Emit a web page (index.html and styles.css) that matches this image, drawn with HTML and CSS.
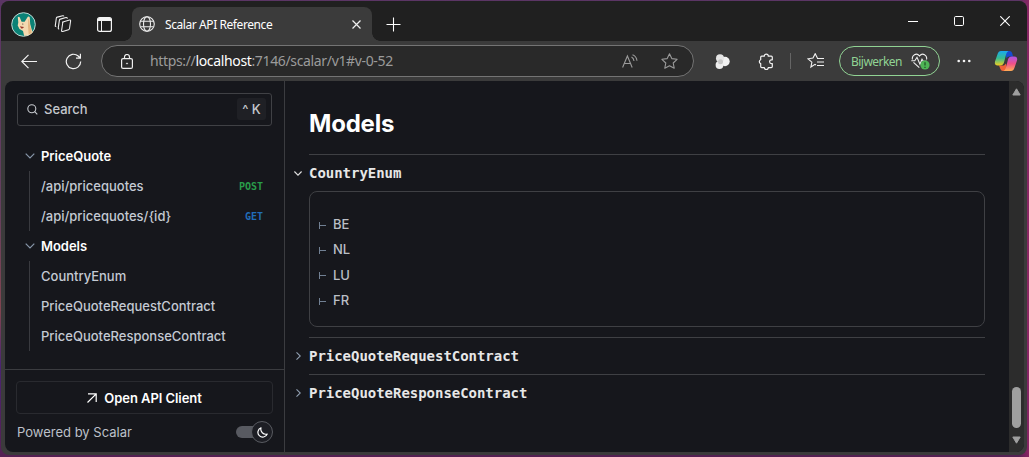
FILE: index.html
```html
<!DOCTYPE html>
<html lang="en">
<head>
<meta charset="utf-8">
<title>Scalar API Reference</title>
<link rel="stylesheet" href="styles.css">
</head>
<body>
<div class="window">
  <header class="tabstrip">
    <svg class="avatar" width="25" height="25" viewBox="0 0 25 25"><circle cx="12.500" cy="12.500" r="11.800" fill="#0b8276" stroke="#bdd8d4" stroke-width="1"/><path d="M7.300 10.500L6.800 5.200q1-1.200 2 .2l1.800 4.400h3l3.200-5q1.300-1 2 .7l.4 6.500 1.500 5.500 1 3q-3.500 3.600-8.600 3.300L12 19l-3.500-2-1.800-3.500z" fill="#f4d9b0"/><path d="M17.200 7l1.100 1 .5 5 1.500 5 .4 2.800-3 1.700-.7-8z" fill="#e3b681"/><path d="M8.800 14.300l4.200.6q-1.300 2-2.700 1.500z" fill="#9c3829"/><circle cx="11.800" cy="12" r=".6" fill="#3f3029"/></svg>
    <svg class="workspaces" width="18" height="18" viewBox="0 0 18 18" fill="none" stroke="#eee" stroke-width="1.100" stroke-linejoin="round"><path d="M8 7.200L15.600 5q1.200-.2 1 1L15.500 13.500q-.1.900-1 1.200L8.700 16.500q-1.300.3-1.100-1L8.700 8q.1-.7.900-1M5.200 14q-1.100 0-.9-1.300L5.400 5.200q.1-.8 1-1.100L12 2.500q1.300-.3 1.200 1.200M2.300 11.800q-1.200 0-1-1.200L2.300 3.300q.1-.9 1-1.200L8.700.8q1-.2 1.200.6"/></svg>
    <svg class="tab-actions" width="15" height="15" viewBox="0 0 15 15"><rect x=".6" y=".6" width="13.800" height="13.800" rx="2" fill="none" stroke="#f4f4f4" stroke-width="1.200"/><path d="M1 2a1 1 0 0 1 1-1h11a1 1 0 0 1 1 1v2H1z" fill="#f4f4f4"/><path d="M4.500 4v10" stroke="#f4f4f4"/></svg>
    <div class="tab">
      <svg width="16" height="16" viewBox="0 0 16 16" fill="none" stroke="#ececec" stroke-width="1.100"><circle cx="8" cy="8" r="7.300"/><ellipse cx="8" cy="8" rx="3.500" ry="7.300"/><path d="M1.500 5.300h13M1.500 10.700h13"/></svg>
      <span class="tab-title">Scalar API Reference</span>
      <svg class="tab-close" width="9" height="9" viewBox="0 0 9 9" stroke="#f0f0f0" stroke-width="1.200"><path d="M.5.5l8 8M8.500.5l-8 8"/></svg>
    </div>
    <svg class="new-tab" width="15" height="15" viewBox="0 0 15 15" stroke="#fff" stroke-width="1.100"><path d="M.5 7.500h14M7.500.5v14"/></svg>
    <div class="controls">
      <svg width="10" height="10" viewBox="0 0 10 10"><path d="M0 5.500h10" stroke="#fff"/></svg>
      <svg width="10" height="10" viewBox="0 0 10 10"><rect x=".5" y=".5" width="9" height="9" rx="1.200" fill="none" stroke="#fff"/></svg>
      <svg width="10" height="10" viewBox="0 0 10 10" stroke="#fff" stroke-width="1.100"><path d="M.3.3l9.400 9.400M9.700.3L.3 9.700"/></svg>
    </div>
  </header>

  <div class="toolbar">
    <svg width="16" height="15" viewBox="0 0 16 15" fill="none" stroke="#f2f2f2" stroke-width="1.200"><path d="M16 7.500H.8M7.500.8L.8 7.500l6.700 6.700"/></svg>
    <svg class="reload" width="17" height="17" viewBox="0 0 17 17" fill="none" stroke="#f2f2f2" stroke-width="1.200"><path d="M15.700 8.500A7.200 7.200 0 1 1 13.200 3l2 2M15.400.8V5.200H11"/></svg>
    <div class="address">
      <svg width="12" height="15" viewBox="0 0 12 15" fill="none" stroke="#eee" stroke-width="1.200"><rect x=".6" y="4.600" width="10.800" height="9.800" rx="1.500"/><path d="M3.500 4.500V3a2.500 2.500 0 0 1 5 0v1.500"/><circle cx="6" cy="9.500" r=".6" fill="#eee" stroke-width=".6"/></svg>
      <span class="url">https://<b>localhost</b>:7146/scalar/v1#v-0-52</span>
      <svg class="read-aloud" width="16" height="15" viewBox="0 0 16 15" fill="none" stroke="#9a9a9a" stroke-width="1.100"><path d="M.6 13.500L5.400 2l4.800 11.500M2.200 9.500h6.400M9.500 3q2.300 1.200 2.500 4M10.500.8q4 1.500 4.500 6"/></svg>
      <svg class="favorite" width="17" height="16" viewBox="0 0 17 16" fill="none" stroke="#9a9a9a" stroke-width="1.100" stroke-linejoin="round"><path d="M8.500.8l2.300 4.800 5.300.7-3.900 3.700 1 5.200-4.700-2.500-4.700 2.500 1-5.200L.9 6.300l5.300-.7z"/></svg>
    </div>
    <svg class="ext" width="15" height="15" viewBox="0 0 15 15"><circle cx="10" cy="7.500" r="4.700" fill="#f1f1f1"/><circle cx="5" cy="4.300" r="4" fill="#e4e4e4"/><circle cx="4.500" cy="11" r="3.900" fill="#ededed"/><circle cx="5.500" cy="7.700" r="2.500" fill="#c7c7c7"/></svg>
    <svg class="puzzle" width="16" height="17" viewBox="0 0 16 17" fill="none" stroke="#f2f2f2" stroke-width="1.200" stroke-linejoin="round"><path d="M3.700 3.200h2.600a2 2 0 0 1 4 0h3q1 0 1 1v2.600h-.8a1.900 1.900 0 0 0 0 3.800h.8v3q0 1-1 1h-3a2 2 0 0 1-4 0H3.700q-1 0-1-1v-3a2 2 0 0 1 0-3.800V4.200q0-1 1-1z"/></svg>
    <i class="divider"></i>
    <svg class="favlist" width="17" height="16" viewBox="0 0 17 16" fill="none" stroke="#f2f2f2" stroke-width="1.100"><path d="M9 12l-1-.6L3.900 14l1-4.800L1 5.800l5-.7L8.200.7l2.200 4.400M10 5.500h7M10 9h7M10 12.500h7"/></svg>
    <button class="update"><span>Bijwerken</span>
      <svg width="19" height="17" viewBox="0 0 19 17" fill="none" stroke="#eee" stroke-width="1.100"><path d="M1.500 6.500C.4 2.500 5.500-1 8.500 3 11.500-1 16.600 2.500 15.500 6.500M2.500 9.300l5.800 5.400M.3 7.700h3.500L6 4.300l3 7 2-5 1.300 2h3.500"/><circle cx="14" cy="12" r="4.600" fill="#4eb455" stroke="none"/><path d="M14 9.200v3.300M14 13.700v1.200" stroke="#1e4d22" stroke-width="1.200"/></svg>
    </button>
    <svg class="more" width="14" height="4" viewBox="0 0 14 4" fill="#f4f4f4"><circle cx="1.700" cy="2" r="1.300"/><circle cx="7" cy="2" r="1.300"/><circle cx="12.300" cy="2" r="1.300"/></svg>
    <svg class="copilot" width="24" height="22" viewBox="0 0 24 22">
      <defs><linearGradient id="a" x2="0" y2="1"><stop stop-color="#19a9ef"/><stop offset=".5" stop-color="#36bc91"/><stop offset="1" stop-color="#f3cd20"/></linearGradient><linearGradient id="b" x2="0" y2="1"><stop stop-color="#ad55e4"/><stop offset=".5" stop-color="#ef5089"/><stop offset="1" stop-color="#ffad55"/></linearGradient></defs>
      <path d="M11 1h4.500q2 0 2.600 2l1 3.500h-4q-2 0-2.600 2z" fill="#174bd0"/><path d="M5 15.500h5l2-2 1 7.500H9q-2 0-2.600-2z" fill="#f06138"/>
      <path d="M7 1h7.500q-1.700 1-2.300 3L10 12.500q-.8 3-4 3H4q-4 0-3-4L3.600 4Q4.500 1 7 1z" fill="url(#a)"/><path d="M17 21H9.500q1.700-1 2.300-3L14 9.500q.8-3 4-3H20q4 0 3 4l-2.600 7.500q-.9 3-3.400 3z" fill="url(#b)"/>
    </svg>
  </div>

  <div class="page">
    <aside class="sidebar">
      <div class="search">
        <svg width="11" height="11" viewBox="0 0 11 11" fill="none" stroke="#c8cbd0" stroke-width="1.100"><circle cx="4.800" cy="4.800" r="4"/><path d="M7.700 7.700l2.600 2.600"/></svg>
        <span>Search</span><kbd><i>^</i> K</kbd>
      </div>
      <nav class="nav">
        <div class="group"><svg width="10" height="6" viewBox="0 0 10 6" fill="none" stroke="#8796a9" stroke-width="1.200"><path d="M.7.7L5 5 9.300.7"/></svg>PriceQuote</div>
        <div class="items">
          <a>/api/pricequotes<em class="method post">POST</em></a>
          <a>/api/pricequotes/{id}<em class="method get">GET</em></a>
        </div>
        <div class="group"><svg width="10" height="6" viewBox="0 0 10 6" fill="none" stroke="#8796a9" stroke-width="1.200"><path d="M.7.7L5 5 9.300.7"/></svg>Models</div>
        <div class="items">
          <a>CountryEnum</a>
          <a>PriceQuoteRequestContract</a>
          <a>PriceQuoteResponseContract</a>
        </div>
      </nav>
      <footer class="side-foot">
        <button class="client"><svg width="10" height="10" viewBox="0 0 10 10" fill="none" stroke="#fff" stroke-width="1.200"><path d="M.5 9.500l8.700-8.700M1 .8h8.200V9"/></svg>Open API Client</button>
        <div class="powered"><span>Powered by Scalar</span>
          <span class="toggle"><span class="knob"><svg width="11" height="11" viewBox="0 0 11 11" fill="none" stroke="#fff" stroke-width="1.200" stroke-linejoin="round"><path d="M4 .8A4.800 4.800 0 1 0 10.200 7 5 5 0 0 1 4 .8z"/></svg></span></span>
        </div>
      </footer>
    </aside>

    <main class="content">
      <h1>Models</h1>
      <section class="model first">
        <h2><svg class="down" width="8" height="5" viewBox="0 0 8 5" fill="none" stroke="#e0e0e0" stroke-width="1.100"><path d="M.4.5L4 4.200 7.600.5"/></svg>CountryEnum</h2>
        <ul class="enum"><li><i></i>BE</li><li><i></i>NL</li><li><i></i>LU</li><li><i></i>FR</li></ul>
      </section>
      <section class="model">
        <h2><svg width="5" height="8" viewBox="0 0 5 8" fill="none" stroke="#91a0b2" stroke-width="1.100"><path d="M.5.4L4.300 4 .5 7.600"/></svg>PriceQuoteRequestContract</h2>
      </section>
      <section class="model">
        <h2><svg width="5" height="8" viewBox="0 0 5 8" fill="none" stroke="#91a0b2" stroke-width="1.100"><path d="M.5.4L4.300 4 .5 7.600"/></svg>PriceQuoteResponseContract</h2>
      </section>
    </main>

    <div class="scrollbar">
      <svg width="9" height="8" viewBox="0 0 9 8"><path d="M4.500.8l3.700 6.200H.8z" fill="#9f9f9f" stroke="#9f9f9f" stroke-linejoin="round"/></svg>
      <div class="thumb"></div>
      <svg width="9" height="8" viewBox="0 0 9 8"><path d="M4.500 7.200L.8 1h7.400z" fill="#9f9f9f" stroke="#9f9f9f" stroke-linejoin="round"/></svg>
    </div>
  </div>
</div>
</body>
</html>
```
FILE: styles.css
```css
* { box-sizing: border-box; }
body {
  margin: 0;
  width: 1029px;
  height: 457px;
  padding: 1px 2px 2px 1px;
  overflow: hidden;
  background: linear-gradient(90deg, rgba(59, 24, 104, 0) 99%, #8c2464 100%), linear-gradient(#5b3565 0%, #643f5e 45%, #81444f 68%, #4a2472 80%, #542052 100%);
  font-family: Inter, "Liberation Sans", sans-serif;
}
svg { display: block; flex: none; }
i, em { font-style: normal; }

.window {
  height: 454px;
  width: 1026px;
  display: flex;
  flex-direction: column;
  overflow: hidden;
  border-radius: 8px;
  background: #3b3b3b;
}
.tabstrip {
  height: 40px;
  flex: none;
  display: flex;
  align-items: center;
  padding-left: 10px;
  padding-top: 6px;
  background: #202020;
  font-family: "Noto Sans", sans-serif;
}
.workspaces { margin-left: 18px; }
.tab-actions { margin-left: 25px; }
.tab {
  position: relative;
  width: 240px;
  height: 34px;
  margin-left: 20px;
  padding: 0 11px 0 7px;
  display: flex;
  align-items: center;
  border-radius: 8px 8px 0 0;
  background: #3b3b3b;
}
.tab::before, .tab::after {
  content: "";
  position: absolute;
  bottom: 0;
  width: 8px;
  height: 8px;
}
.tab::before { left: -8px; background: radial-gradient(circle at 0 0, #202020 7.500px, #3b3b3b 8px); }
.tab::after { right: -8px; background: radial-gradient(circle at 100% 0, #202020 7.500px, #3b3b3b 8px); }
.tab-title { margin-left: 10px; font-size: 12px; letter-spacing: -.42px; color: #fff; white-space: nowrap; }
.tab-close { margin-left: auto; }
.new-tab { margin-left: 14px; }
.controls { margin-left: auto; display: flex; gap: 36px; padding-right: 17px; margin-top: -6px; }

.toolbar {
  height: 40px;
  flex: none;
  display: flex;
  align-items: center;
  padding-left: 20px;
  font-family: "Noto Sans", sans-serif;
}
.reload { margin-left: 28px; }
.address {
  width: 593px;
  height: 32px;
  margin-left: 19px;
  padding: 0 15px 0 19px;
  display: flex;
  align-items: center;
  border: 1px solid #747474;
  border-radius: 16px;
  background: #292929;
}
.url { margin-left: 17px; padding-bottom: 1px; font-size: 14px; letter-spacing: -.35px; color: #9b9b9b; white-space: nowrap; }
.url b { font-weight: 400; color: #fff; }
.read-aloud { margin-left: auto; }
.favorite { margin-left: 23px; }
.ext { margin-left: 21px; }
.puzzle { margin-left: 28px; }
.divider { width: 1px; height: 16px; margin-left: 16px; background: #656565; }
.favlist { margin-left: 16px; }
.update {
  width: 101px;
  height: 30px;
  margin-left: 15px;
  padding: 0 9px 0 11px;
  display: flex;
  align-items: center;
  justify-content: space-between;
  border: 1px solid #91d394;
  border-radius: 15px;
  background: transparent;
  color: #91d394;
  font: 12px "Noto Sans", sans-serif;
  letter-spacing: -.53px;
}
.more { margin-left: 17px; }
.copilot { margin-left: 23px; }

.page {
  width: 1019px;
  height: 371px;
  margin-left: 4px;
  display: flex;
  overflow: hidden;
  border-radius: 8px;
  background: #16171c;
}
.sidebar {
  width: 280px;
  flex: none;
  display: flex;
  flex-direction: column;
  border-right: 1px solid #3b3c40;
}
.search {
  height: 33px;
  margin: 12px 12px 15px;
  padding: 0 5px 1px 9px;
  display: flex;
  align-items: center;
  gap: 6px;
  border: 1px solid #404145;
  border-radius: 3px;
  color: #c5c8cd;
  font-size: 13px;
  font-weight: 500;
}
.search kbd {
  margin-left: auto;
  width: 29px;
  height: 22px;
  text-align: center;
  border-radius: 3px;
  background: #1f2025;
  font: inherit;
  line-height: 22px;
  white-space: nowrap;
}
.search kbd i { font-size: 13px; }
.nav { flex: 1; font-size: 13px; font-weight: 500; }
.group {
  height: 30px;
  padding-left: 20px;
  display: flex;
  align-items: center;
  gap: 6px;
  color: #fff;
  font-weight: 600;
  letter-spacing: -.03px;
}
.items { margin-left: 24px; border-left: 1px solid #393a3f; }
.items a {
  height: 30px;
  padding: 0 21px 0 11px;
  display: flex;
  align-items: center;
  justify-content: space-between;
  color: #c4cad3;
}
.method { font: bold 10px "DejaVu Sans Mono", monospace; }
.post { color: #299c4a; }
.get { color: #216cb8; }
.side-foot { height: 83px; padding: 11px 11px 0; border-top: 1px solid #3b3c40; }
.client {
  width: 257px;
  height: 33px;
  display: flex;
  align-items: center;
  justify-content: center;
  gap: 7px;
  border: 1px solid #292a2f;
  border-radius: 4px;
  background: transparent;
  color: #fff;
  font: 600 13px Inter, sans-serif;
  letter-spacing: -.06px;
}
.powered {
  height: 22px;
  margin-top: 7px;
  padding-left: 1px;
  display: flex;
  align-items: center;
  justify-content: space-between;
  color: #bdc1c9;
  font-size: 13px;
}
.toggle {
  position: relative;
  width: 37px;
  height: 22px;
  display: flex;
  justify-content: flex-end;
}
.toggle::before {
  content: "";
  position: absolute;
  left: 0;
  top: 5px;
  width: 26px;
  height: 12px;
  border-radius: 6px;
  background: #585a61;
}
.knob {
  position: relative;
  width: 22px;
  height: 22px;
  display: grid;
  place-items: center;
  border: 1px solid #595b61;
  border-radius: 50%;
  background: #1d1e24;
}

.content { width: 700px; margin-left: 24px; flex: none; }
h1 { margin: 27px 0 15px; font-size: 24px; line-height: 31px; font-weight: 700; letter-spacing: -.2px; color: #fff; }
.model { width: 676px; border-top: 1px solid #3f4044; }
.model h2 {
  height: 36px;
  margin: 0 0 0 -15px;
  display: flex;
  align-items: center;
  font: bold 14px "DejaVu Sans Mono", monospace;
  letter-spacing: -.03px;
  color: #e7e7e7;
}
.model h2 svg { margin: 0 8px 0 2px; }
.model h2 .down { margin: 0 7px 0 0; }
.first { height: 183px; }
.enum {
  height: 136px;
  margin: 0;
  padding: 19.500px 9px;
  list-style: none;
  border: 1px solid #3f4044;
  border-radius: 8px;
  color: #bbbfc6;
  font-size: 13px;
}
.enum li { height: 25.300px; display: flex; align-items: center; gap: 6px; font-weight: 500; }
.enum i {
  width: 8px;
  height: 7px;
  margin-top: 2px;
  border-left: 1px solid #718093;
  background: linear-gradient(#718093, #718093) 0 3px / 6px 1px no-repeat;
}
.scrollbar {
  width: 15px;
  margin-left: auto;
  padding: 7px 0 8px;
  display: flex;
  flex-direction: column;
  align-items: center;
  background: #2c2c2c;
}
.thumb { width: 9px; height: 41px; margin: auto 0 8px; border-radius: 5px; background: #9f9f9f; }
```
